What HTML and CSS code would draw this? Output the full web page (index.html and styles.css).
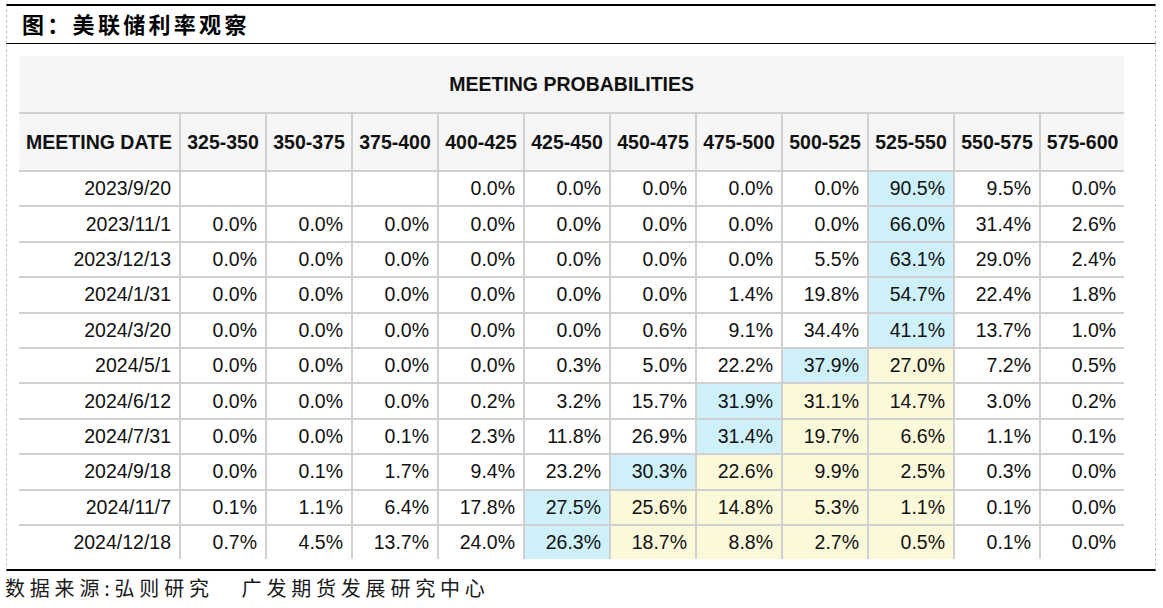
FILE: index.html
```html
<!DOCTYPE html>
<html lang="zh">
<head>
<meta charset="utf-8">
<title>美联储利率观察</title>
<link rel="stylesheet" href="styles.css">
</head>
<body>
<div class="figure">
  <div class="fig-title">图：美联储利率观察</div>
  <div class="fig-body">
    <table class="prob">
      <colgroup>
        <col class="c-date">
        <col class="c-n"><col class="c-n"><col class="c-n"><col class="c-n"><col class="c-n">
        <col class="c-n"><col class="c-n"><col class="c-n"><col class="c-n"><col class="c-n">
        <col class="c-last">
      </colgroup>
      <thead>
        <tr class="cap"><th colspan="12">MEETING PROBABILITIES</th></tr>
        <tr class="hdr">
          <th>MEETING DATE</th><th>325-350</th><th>350-375</th><th>375-400</th><th>400-425</th><th>425-450</th><th>450-475</th><th>475-500</th><th>500-525</th><th>525-550</th><th>550-575</th><th>575-600</th>
        </tr>
      </thead>
      <tbody>
        <tr><td>2023/9/20</td><td></td><td></td><td></td><td>0.0%</td><td>0.0%</td><td>0.0%</td><td>0.0%</td><td>0.0%</td><td class="b">90.5%</td><td>9.5%</td><td>0.0%</td></tr>
        <tr><td>2023/11/1</td><td>0.0%</td><td>0.0%</td><td>0.0%</td><td>0.0%</td><td>0.0%</td><td>0.0%</td><td>0.0%</td><td>0.0%</td><td class="b">66.0%</td><td>31.4%</td><td>2.6%</td></tr>
        <tr><td>2023/12/13</td><td>0.0%</td><td>0.0%</td><td>0.0%</td><td>0.0%</td><td>0.0%</td><td>0.0%</td><td>0.0%</td><td>5.5%</td><td class="b">63.1%</td><td>29.0%</td><td>2.4%</td></tr>
        <tr><td>2024/1/31</td><td>0.0%</td><td>0.0%</td><td>0.0%</td><td>0.0%</td><td>0.0%</td><td>0.0%</td><td>1.4%</td><td>19.8%</td><td class="b">54.7%</td><td>22.4%</td><td>1.8%</td></tr>
        <tr><td>2024/3/20</td><td>0.0%</td><td>0.0%</td><td>0.0%</td><td>0.0%</td><td>0.0%</td><td>0.6%</td><td>9.1%</td><td>34.4%</td><td class="b">41.1%</td><td>13.7%</td><td>1.0%</td></tr>
        <tr><td>2024/5/1</td><td>0.0%</td><td>0.0%</td><td>0.0%</td><td>0.0%</td><td>0.3%</td><td>5.0%</td><td>22.2%</td><td class="b">37.9%</td><td class="y">27.0%</td><td>7.2%</td><td>0.5%</td></tr>
        <tr><td>2024/6/12</td><td>0.0%</td><td>0.0%</td><td>0.0%</td><td>0.2%</td><td>3.2%</td><td>15.7%</td><td class="b">31.9%</td><td class="y">31.1%</td><td class="y">14.7%</td><td>3.0%</td><td>0.2%</td></tr>
        <tr><td>2024/7/31</td><td>0.0%</td><td>0.0%</td><td>0.1%</td><td>2.3%</td><td>11.8%</td><td>26.9%</td><td class="b">31.4%</td><td class="y">19.7%</td><td class="y">6.6%</td><td>1.1%</td><td>0.1%</td></tr>
        <tr><td>2024/9/18</td><td>0.0%</td><td>0.1%</td><td>1.7%</td><td>9.4%</td><td>23.2%</td><td class="b">30.3%</td><td class="y">22.6%</td><td class="y">9.9%</td><td class="y">2.5%</td><td>0.3%</td><td>0.0%</td></tr>
        <tr><td>2024/11/7</td><td>0.1%</td><td>1.1%</td><td>6.4%</td><td>17.8%</td><td class="b">27.5%</td><td class="y">25.6%</td><td class="y">14.8%</td><td class="y">5.3%</td><td class="y">1.1%</td><td>0.1%</td><td>0.0%</td></tr>
        <tr class="lastrow"><td>2024/12/18</td><td>0.7%</td><td>4.5%</td><td>13.7%</td><td>24.0%</td><td class="b">26.3%</td><td class="y">18.7%</td><td class="y">8.8%</td><td class="y">2.7%</td><td class="y">0.5%</td><td>0.1%</td><td>0.0%</td></tr>
      </tbody>
    </table>
  </div>
  <div class="fig-source">数据来源:弘则研究   广发期货发展研究中心</div>
</div>
</body>
</html>
```
FILE: styles.css
```css
html, body {
  margin: 0;
  padding: 0;
  background: #ffffff;
}

.figure {
  width: 1150px;
  margin: 4px 0 0 6px;
}

.fig-title {
  border-top: 2px solid #000;
  border-bottom: 1px solid #000;
  border-left: 1px dashed #c4c4c4;
  border-right: 1px dashed #c4c4c4;
  box-sizing: border-box;
  height: 40px;
  display: flex;
  align-items: center;
  padding: 0 0 4px 15px;
  font-family: "Noto Sans CJK SC", sans-serif;
  font-weight: 700;
  font-size: 22px;
  letter-spacing: 3.3px;
  color: #000;
}

.fig-body {
  border-left: 1px dashed #c4c4c4;
  border-right: 1px dashed #c4c4c4;
  border-bottom: 2px solid #000;
  padding: 12px 0 0 12px;
  height: 513px;
  overflow: hidden;
}

.prob {
  border-collapse: collapse;
  table-layout: fixed;
  width: 1105px;
  font-family: "Liberation Sans", Arial, sans-serif;
  font-size: 19.5px;
  color: #111;
}

.c-date { width: 161px; }
.c-n { width: 86px; }
.c-last { width: 84px; }

.prob th, .prob td {
  border: 2px solid #d0d0d0;
  padding: 0 8px 0 0;
  white-space: nowrap;
  overflow: hidden;
}

.prob tr > :first-child { border-left: none; }
.prob tr > :last-child { border-right: none; }

.prob .cap th {
  height: 56px;
  border-top: none;
  background: #f6f6f6;
  text-align: center;
  padding: 0;
  font-weight: 700;
  color: #111;
}

.prob .hdr th {
  height: 56px;
  background: #f6f6f6;
  text-align: center;
  padding: 0;
  font-weight: 700;
  color: #111;
}

.prob td {
  height: 33.4px;
  text-align: right;
  background: #fff;
}

.prob .lastrow td { border-bottom: none; }

.prob td.b { background: #cdf0f9; }
.prob td.y { background: #fbf9da; }

.fig-source {
  margin-top: 4px;
  margin-left: -1px;
  font-family: "Noto Sans CJK SC", sans-serif;
  font-size: 20px;
  letter-spacing: 4.8px;
  color: #1a1a1a;
  white-space: pre;
  line-height: 26px;
}
```
